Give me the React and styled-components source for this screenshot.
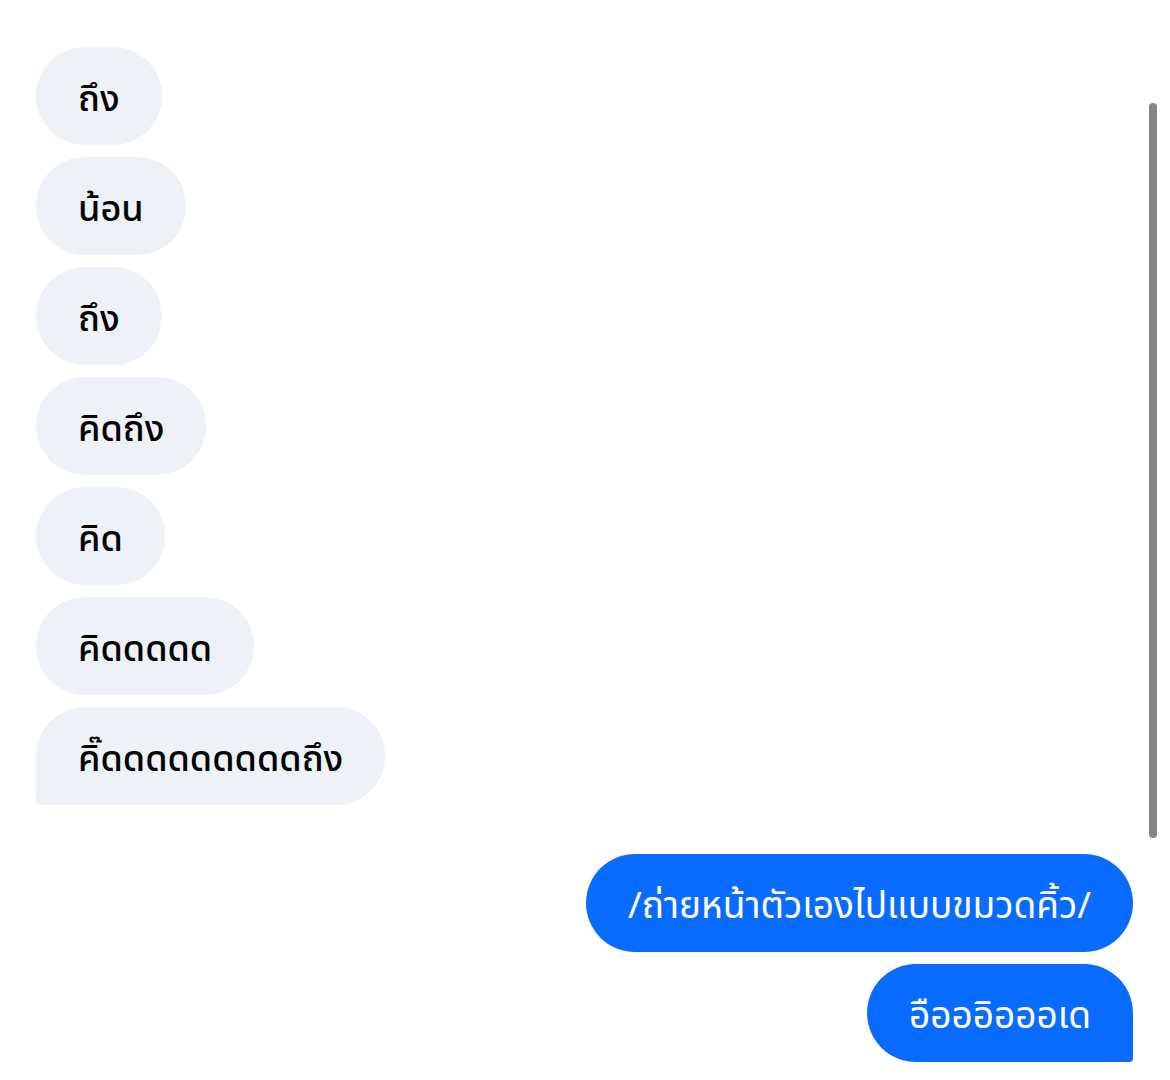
import React from "react";
import styled, { createGlobalStyle } from "styled-components";

const GlobalStyle = createGlobalStyle`
  html, body {
    margin: 0;
    padding: 0;
    background: #ffffff;
  }
  body {
    font-family: "Noto Sans Thai", "Noto Sans", "Liberation Sans", sans-serif;
  }
`;

const Thread = styled.div`
  position: relative;
  width: 1170px;
  height: 1080px;
  box-sizing: border-box;
  padding: 47px 37px 0 36px;
  display: flex;
  flex-direction: column;
  overflow: hidden;
`;

const Group = styled.div`
  display: flex;
  flex-direction: column;
  align-items: ${(p) => (p.$mine ? "flex-end" : "flex-start")};
  gap: 12px;
  margin-top: ${(p) => (p.$mine ? "49px" : "0")};
`;

const Bubble = styled.div`
  box-sizing: border-box;
  height: 98px;
  padding: 7px 42px 0;
  display: flex;
  align-items: center;
  white-space: nowrap;
  font-size: ${(p) => (p.$mine ? "37px" : "36px")};
  font-weight: ${(p) => (p.$mine ? 400 : 500)};
  line-height: 44px;
  border-radius: 49px;
  background: ${(p) => (p.$mine ? "#0a6cff" : "#eef1f6")};
  color: ${(p) => (p.$mine ? "#ffffff" : "#050505")};
  ${(p) =>
    p.$last && !p.$mine ? "border-bottom-left-radius: 4px;" : ""}
  ${(p) =>
    p.$last && p.$mine ? "border-bottom-right-radius: 4px;" : ""}
`;

const ScrollThumb = styled.div`
  position: absolute;
  top: 103px;
  left: 1149px;
  width: 8px;
  height: 735px;
  border-radius: 4px;
  background: #858585;
`;

const theirs = [
  "ถึง",
  "น้อน",
  "ถึง",
  "คิดถึง",
  "คิด",
  "คิดดดดด",
  "คิ๊ดดดดดดดดดถึง",
];

const mine = ["/ถ่ายหน้าตัวเองไปแบบขมวดคิ้ว/", "อือออิอออเด"];

export default function App() {
  return (
    <>
      <GlobalStyle />
      <Thread>
        <Group>
          {theirs.map((t, i) => (
            <Bubble key={i} $last={i === theirs.length - 1}>
              {t}
            </Bubble>
          ))}
        </Group>
        <Group $mine>
          {mine.map((t, i) => (
            <Bubble key={i} $mine $last={i === mine.length - 1}>
              {t}
            </Bubble>
          ))}
        </Group>
        <ScrollThumb />
      </Thread>
    </>
  );
}
